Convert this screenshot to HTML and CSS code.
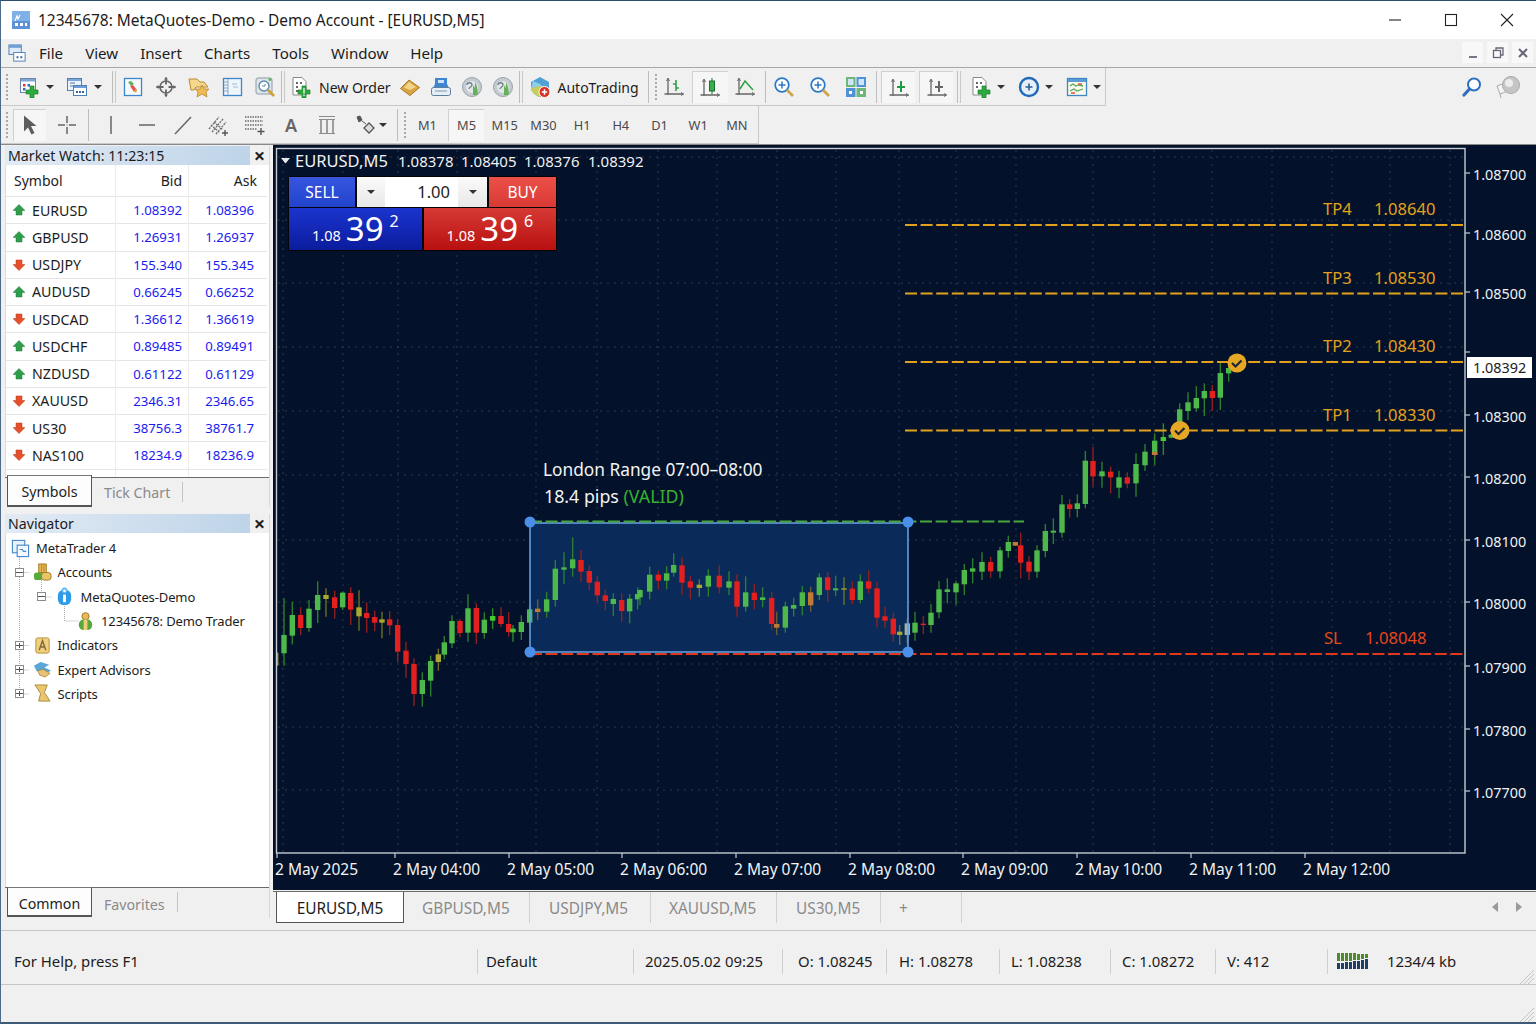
FILE: index.html
```html
<!DOCTYPE html>
<html lang="en">
<head>
<meta charset="utf-8">
<title>12345678: MetaQuotes-Demo - Demo Account - [EURUSD,M5]</title>
<link rel="stylesheet" href="styles.css">
</head>
<body>
<svg class="defs" xmlns="http://www.w3.org/2000/svg">
  <symbol id="i-new" viewBox="0 0 22 22"><rect x="2.500" y="2.500" width="15" height="14" fill="#fff" stroke="#6d86a8"/><path d="M3 3h14v2.500H3z" fill="#7fa6d6"/><path d="M5 8h2.500v2.500H5z" fill="#d33"/><path d="M9.500 8h2.500v2.500H9.500z" fill="#36c"/><path d="M5 12h2.500v2.500H5z" fill="#36c"/><path d="M12 10h4v4h4v4h-4v4h-4v-4H8v-4h4z" fill="#2cab3c" stroke="#1b7f2b" stroke-width=".7"/></symbol>
  <symbol id="i-prof" viewBox="0 0 22 22"><rect x="1.500" y="2.500" width="14" height="12" fill="#eaf2fb" stroke="#4e7fb5"/><path d="M2 3h13v2H2z" fill="#7fa6d6"/><path d="M4 7h5M4 10h3" stroke="#56799f"/><rect x="7.500" y="9.500" width="13" height="10" fill="#fff" stroke="#4e7fb5"/><path d="M8 10h12v2H8z" fill="#6f9fd6"/><path d="M10 15h2v2h-2zM13 15h2v2h-2zM16 15h2v2h-2z" fill="#36639c"/></symbol>
  <symbol id="i-mw" viewBox="0 0 22 22"><rect x="2.500" y="2.500" width="17" height="17" fill="#f5fafe" stroke="#3f86c9" stroke-width="1.300"/><path d="M6 6l3-1 3 3-3 2z" fill="#5cb45a"/><path d="M8 10l3-1 4 5-3 2z" fill="#e2574c"/><circle cx="13.500" cy="15" r="1.400" fill="#e8a33c"/></symbol>
  <symbol id="i-cross" viewBox="0 0 22 22"><circle cx="11" cy="11" r="6" fill="none" stroke="#666" stroke-width="1.600"/><path d="M11 1.500v7M11 13.500v7M1.500 11h7M13.500 11h7" stroke="#666" stroke-width="1.800"/><path d="M9 3.500l2-2.500 2 2.500zM9 18.500l2 2.500 2-2.500zM3.500 9L1 11l2.500 2zM18.500 9L21 11l-2.500 2z" fill="#666"/></symbol>
  <symbol id="i-fold" viewBox="0 0 22 22"><path d="M1 3h8l3 3h4l4 5H8l-2 3H3z" fill="#f5d88e" stroke="#b98a2e"/><path d="M14 9l2 4h5l-3 3 1 5-5-3-5 3 1-5-3-3h5z" fill="#eebb55" stroke="#b98a2e" stroke-width=".8"/></symbol>
  <symbol id="i-nav" viewBox="0 0 22 22"><rect x="2.500" y="2.500" width="18" height="17" fill="#eef6fd" stroke="#3f86c9" stroke-width="1.300"/><path d="M7 3v16" stroke="#8aa9c4"/><path d="M3 6h4M3 9h4M3 12h4M3 15h4" stroke="#8aa9c4"/><path d="M11 8h5M12 11h5" stroke="#9cbcd8"/></symbol>
  <symbol id="i-test" viewBox="0 0 22 22"><rect x="2" y="2" width="16" height="16" rx="2" fill="#dde6ea" stroke="#8e9aa4"/><circle cx="10" cy="10" r="5" fill="#fff" stroke="#5d8bab" stroke-width="1.400"/><path d="M8 10h3v-2" fill="none" stroke="#5d8bab"/><circle cx="16" cy="3.500" r="1.500" fill="#5cb45a"/><path d="M14 14l6 6" stroke="#d0a030" stroke-width="2.600"/></symbol>
  <symbol id="i-order" viewBox="0 0 22 22"><path d="M3 1.500h9l4 4V19H3z" fill="#fff" stroke="#8a8a8a"/><path d="M6 6h2v2H6zM10 6h2v2h-2zM6 10h2v2H6zM6 14h2v2H6z" fill="#666"/><path d="M12 10h4v4h4v4h-4v4h-4v-4H8v-4h4z" fill="#2cab3c" stroke="#1b7f2b" stroke-width=".7"/><path d="M14 12v5.500M14 18.500v1.500" stroke="#fff" stroke-width="1.200"/></symbol>
  <symbol id="i-gold" viewBox="0 0 22 22"><path d="M1.500 12.500L10 4l10.500 7.500L11 19.500z" fill="#d9a441" stroke="#a87a22"/><path d="M5 11.500L10 6l7 5-6 3z" fill="#f1d38a"/></symbol>
  <symbol id="i-print" viewBox="0 0 22 22"><path d="M5 2h12v6l2 4H3l2-4z" fill="#3f86d0"/><path d="M8 4h6v3H8z" fill="#cfe3f6"/><rect x="1.500" y="11.500" width="19" height="8" rx="2" fill="#e6edf3" stroke="#5a7f9f"/><path d="M5 15h12" stroke="#7f9bb5"/></symbol>
  <symbol id="i-sig" viewBox="0 0 22 22"><circle cx="11" cy="11" r="9.500" fill="#c5ccd1" stroke="#98a3aa"/><circle cx="11" cy="11" r="6" fill="#e3e7ea"/><path d="M6 9c0-3 5-3 5 0 0 2-3 2-3 4" fill="none" stroke="#71818c" stroke-width="1.300"/><path d="M12 19V9l1.500 3 1-6 1.500 5 1 8z" fill="#66b25b"/></symbol>
  <symbol id="i-auto" viewBox="0 0 22 22"><path d="M2 6l9-5 9 5v6c0 4-5 8-9 9-4-1-9-5-9-9z" fill="#4fa1d6"/><path d="M4 5l7 3 3 3-12 1z" fill="#8fcdea"/><path d="M2 12l10-2 4 5-5 6c-4-1-9-5-9-9z" fill="#c7cf5a"/><circle cx="15.500" cy="16" r="5.500" fill="#d6322b" stroke="#fff"/><path d="M12.800 16h5.400M15.500 13.300v5.400" stroke="#fff" stroke-width="1.500"/></symbol>
  <symbol id="i-bars" viewBox="0 0 22 22"><path d="M5 3v16M1.500 18h19" stroke="#666" stroke-width="1.300"/><path d="M3.500 5L5 2l1.500 3M18 16.500l2.500 1.500-2.500 1.500" fill="none" stroke="#666"/><path d="M13 4v11" stroke="#2ea043" stroke-width="1.600"/><path d="M10 8h3M13 12h3" stroke="#2ea043" stroke-width="1.400"/></symbol>
  <symbol id="i-cand" viewBox="0 0 22 22"><path d="M5 3v16M1.500 18h19" stroke="#666" stroke-width="1.300"/><path d="M3.500 5L5 2l1.500 3M18 16.500l2.500 1.500-2.500 1.500" fill="none" stroke="#666"/><path d="M13 1v16" stroke="#1f6f33"/><rect x="10.500" y="4" width="5" height="10" fill="#35b04a" stroke="#1f6f33"/></symbol>
  <symbol id="i-line" viewBox="0 0 22 22"><path d="M5 3v16M1.500 18h19" stroke="#666" stroke-width="1.300"/><path d="M3.500 5L5 2l1.500 3M18 16.500l2.500 1.500-2.500 1.500" fill="none" stroke="#666"/><path d="M6 13l5-8 8 9" fill="none" stroke="#2ea043" stroke-width="1.500"/></symbol>
  <symbol id="i-zoom" viewBox="0 0 22 22"><circle cx="9" cy="9" r="6.800" fill="#fff" stroke="#2a78c8" stroke-width="1.700"/><path d="M5.500 9h7M9 5.500v7" stroke="#2a78c8" stroke-width="1.500"/><path d="M14 14l6 6" stroke="#cda54f" stroke-width="2.800"/></symbol>
  <symbol id="i-tile" viewBox="0 0 22 22"><rect x="1" y="1" width="9.500" height="10" fill="#6db77a"/><rect x="11.500" y="1" width="9.500" height="10" fill="#4f93d6"/><rect x="1" y="12" width="9.500" height="9" fill="#4f93d6"/><rect x="11.500" y="12" width="9.500" height="9" fill="#6db77a"/><path d="M3 3h5.500v6H3zM13.500 3H19v6h-5.500z" fill="#cfe6f7"/><path d="M4 15h3v3H4zM15 15h3v3h-3z" fill="#fff"/></symbol>
  <symbol id="i-sh1" viewBox="0 0 22 22"><path d="M5 3v16M1.500 18h19" stroke="#666" stroke-width="1.300"/><path d="M3.500 5L5 2l1.500 3M18 16.500l2.500 1.500-2.500 1.500" fill="none" stroke="#666"/><path d="M13 4v11M9 10h8" stroke="#1f9a45" stroke-width="2"/></symbol>
  <symbol id="i-sh2" viewBox="0 0 22 22"><path d="M5 3v16M1.500 18h19" stroke="#666" stroke-width="1.300"/><path d="M3.500 5L5 2l1.500 3M18 16.500l2.500 1.500-2.500 1.500" fill="none" stroke="#666"/><path d="M13 4v11M9 10h8" stroke="#666" stroke-width="2"/></symbol>
  <symbol id="i-doc" viewBox="0 0 22 22"><path d="M3 1.500h9l4 4V19H3z" fill="#fff" stroke="#8a8a8a"/><path d="M6 6h2v2H6zM10 6h2v2h-2zM6 10h2v2H6z" fill="#666"/><path d="M12 10h4v4h4v4h-4v4h-4v-4H8v-4h4z" fill="#2cab3c" stroke="#1b7f2b" stroke-width=".7"/></symbol>
  <symbol id="i-clock" viewBox="0 0 22 22"><circle cx="11" cy="11" r="9" fill="#e6eff8" stroke="#2068b8" stroke-width="2.400"/><path d="M7.500 11h7M11 7.500v7" stroke="#2d5f96" stroke-width="1.600"/></symbol>
  <symbol id="i-tpl" viewBox="0 0 22 22"><rect x="1.500" y="2.500" width="19" height="17" fill="#fbf8ec" stroke="#3f86c9" stroke-width="1.300"/><path d="M2 3h18v3H2z" fill="#5b9bd5"/><path d="M4 10l3-2 3 2 3-1 4 1M4 15l4-2 3 2 6-2" fill="none" stroke="#5aa85a" stroke-width="1.300"/><path d="M5 17h4M12 8h4" stroke="#d9533c" stroke-width="1.300"/></symbol>
  <symbol id="i-search" viewBox="0 0 22 22"><circle cx="13" cy="8.500" r="6" fill="#fff" stroke="#2f6fc0" stroke-width="2"/><path d="M8.500 13L3 19" stroke="#2f6fc0" stroke-width="3.200" stroke-linecap="round"/></symbol>
  <symbol id="i-ball" viewBox="0 0 28 24"><path d="M3 11l8-3 3 8-8 3z" fill="#f5f5f5" stroke="#aaa"/><path d="M6 19l1 4" stroke="#aaa"/><circle cx="17" cy="10" r="8.500" fill="#c5c5c5" stroke="#aaa"/><circle cx="15" cy="8" r="4" fill="#ececec"/></symbol>
  <symbol id="i-arrow" viewBox="0 0 22 22"><path d="M5 1.500v16l4-4 3.500 7 3-1.500L12 12h5.500z" fill="#5d5d5d"/></symbol>
  <symbol id="i-xh" viewBox="0 0 22 22"><path d="M11 2v7M11 13v7M2 11h7M13 11h7" stroke="#666" stroke-width="1.500"/><path d="M10.500 10.500h1v1h-1z" fill="#666"/></symbol>
  <symbol id="i-v" viewBox="0 0 22 22"><path d="M11 2v18" stroke="#666" stroke-width="1.500"/></symbol>
  <symbol id="i-h" viewBox="0 0 22 22"><path d="M3 11h16" stroke="#666" stroke-width="1.500"/></symbol>
  <symbol id="i-t" viewBox="0 0 22 22"><path d="M3 20L19 3" stroke="#666" stroke-width="1.500"/></symbol>
  <symbol id="i-chan" viewBox="0 0 22 22"><path d="M1 15L11 3M4 18L15 5M8 20L18 8M3 11l9 8M6 8l9 8" stroke="#6a6a6a" stroke-width="1.300" stroke-dasharray="2 1"/><path d="M17 16v6M14 19h6" stroke="#555" stroke-width="1.400"/></symbol>
  <symbol id="i-grid" viewBox="0 0 22 22"><path d="M1 3h18M1 7h18M1 11h18M1 15h12" stroke="#6a6a6a" stroke-width="1.400" stroke-dasharray="1.500 1"/><path d="M17 14v7M13.500 17.500h7" stroke="#555" stroke-width="1.400"/></symbol>
  <symbol id="i-lab" viewBox="0 0 22 22"><path d="M3 2.500h16M3 5.500h16M3 19.500h16" stroke="#8a8a8a"/><path d="M5 6v13M11 6v13M17 6v13" stroke="#8a8a8a" stroke-width="1.600"/></symbol>
  <symbol id="i-arrs" viewBox="0 0 22 22"><path d="M3 3l3-1 2 4-3 2zM8 7l4 3" fill="#555" stroke="#555"/><path d="M15 9l5 5-5 5-5-5z" fill="#ddd" stroke="#555" stroke-width="1.300"/></symbol>
  <symbol id="up" viewBox="0 0 12 12"><path d="M6 .5L12 6.500H9V11H3V6.500H0z" fill="#2f9e4c" stroke="#1f7a38" stroke-width=".5"/></symbol>
  <symbol id="down" viewBox="0 0 12 12"><path d="M6 11.500L12 5.500H9V1H3v4.500H0z" fill="#e4502a" stroke="#b83a1c" stroke-width=".5"/></symbol>
  <symbol id="t-mt" viewBox="0 0 20 20"><rect x="1.500" y="1.500" width="13" height="13" fill="#e8f2fb" stroke="#4a8ad0" stroke-width="1.200"/><rect x="6.500" y="6.500" width="12" height="12" fill="#f5faff" stroke="#4a8ad0" stroke-width="1.200"/><path d="M9 11h3l1 2h3" fill="none" stroke="#4a8ad0" stroke-width="1.200"/></symbol>
  <symbol id="t-acc" viewBox="0 0 20 20"><path d="M6 1h8v9H6z" fill="#e6b85a" stroke="#a37a1f"/><path d="M9 2v7M11.500 2v7" stroke="#a37a1f" stroke-width=".8"/><rect x="1" y="10" width="9" height="8" rx="3" fill="#58a83c"/><rect x="9" y="10" width="10" height="8" rx="3" fill="#e9c56a" stroke="#a37a1f"/></symbol>
  <symbol id="t-info" viewBox="0 0 20 20"><rect x="3" y="3" width="14" height="16" rx="6" fill="#2f9be6"/><circle cx="10" cy="3.500" r="3" fill="#5cb7f2"/><path d="M10 8v8" stroke="#fff" stroke-width="3"/><circle cx="10" cy="4" r="1.400" fill="#fff"/></symbol>
  <symbol id="t-user" viewBox="0 0 20 20"><circle cx="10" cy="4.500" r="3.800" fill="#e8b860" stroke="#a37a1f"/><rect x="3" y="8" width="14" height="11" rx="5" fill="#58a83c"/><path d="M8 8h4v11H8z" fill="#efcd7a"/></symbol>
  <symbol id="t-ind" viewBox="0 0 20 20"><rect x="3" y="2" width="14" height="16" rx="2" fill="#f0cf7e" stroke="#b78d33"/><path d="M6.500 15L10 5l3.500 10M7.800 11.500h4.500" fill="none" stroke="#7d6a3a" stroke-width="1.500"/></symbol>
  <symbol id="t-ea" viewBox="0 0 20 20"><path d="M1 6l7-4 9 3-5 3 7 3-5 3-4-3-6 1z" fill="#5aa6d6"/><path d="M5 11l6-1 7 4-5 4-6-2z" fill="#e6c27a" stroke="#a37a1f" stroke-width=".7"/></symbol>
  <symbol id="t-scr" viewBox="0 0 20 20"><path d="M2 1h13l-3 8 6 9H6l2-8z" fill="#e9c66f" stroke="#a98a38"/></symbol>
</svg>

<div class="win">
  <header class="titlebar">
    <svg class="app-ic" viewBox="0 0 18 18"><rect width="18" height="18" fill="#5c93d6"/><path d="M0 0h18v10H0z" fill="#7fb0e6"/><path d="M3 10l2-5 1 3 2-4" fill="none" stroke="#fff" stroke-width="1.200"/><path d="M3 12h3v3H3zM8 12h3v3H8zM13 12h2v3h-2z" fill="#fff"/></svg>
    <span class="title-text">12345678: MetaQuotes-Demo - Demo Account - [EURUSD,M5]</span>
    <div class="win-btns">
      <svg class="wb" viewBox="0 0 14 14"><path d="M1 7h12" stroke="#222" stroke-width="1.100"/></svg>
      <svg class="wb" viewBox="0 0 14 14"><rect x="1.500" y="1.500" width="11" height="11" fill="none" stroke="#222" stroke-width="1.100"/></svg>
      <svg class="wb" viewBox="0 0 14 14"><path d="M1 1l12 12M13 1L1 13" stroke="#222" stroke-width="1.100"/></svg>
    </div>
  </header>

  <nav class="menubar">
    <svg class="menu-ic" viewBox="0 0 20 20"><rect x="1" y="1" width="13" height="10" fill="#dfeaf6" stroke="#4e7fb5"/><path d="M1 1h13v3H1z" fill="#6f9fd6"/><rect x="6" y="9" width="12" height="9" fill="#fff" stroke="#4e7fb5"/><path d="M9 13h2v2H9zM13 13h2v2h-2z" fill="#36639c"/></svg>
    <span class="m">File</span><span class="m">View</span><span class="m">Insert</span><span class="m">Charts</span><span class="m">Tools</span><span class="m">Window</span><span class="m">Help</span>
    <div class="mdi">
      <span class="mdi-b"><svg viewBox="0 0 12 12"><path d="M2 10h8" stroke="#778" stroke-width="2"/></svg></span>
      <span class="mdi-b"><svg viewBox="0 0 12 12"><rect x="1.500" y="3.500" width="7" height="7" fill="none" stroke="#667" stroke-width="1.300"/><path d="M4 3V1h7v7H9" fill="none" stroke="#667" stroke-width="1.300"/></svg></span>
      <span class="mdi-b"><svg viewBox="0 0 12 12"><path d="M2 2l8 8M10 2l-8 8" stroke="#667" stroke-width="2"/></svg></span>
    </div>
  </nav>

  <div class="toolbar tb1">
    <div class="band band1">
      <i class="grip"></i>
      <div class="split s1"><svg class="ic"><use href="#i-new"/></svg><b class="caret"></b></div>
      <div class="split"><svg class="ic"><use href="#i-prof"/></svg><b class="caret"></b></div>
      <i class="sep sep-a"></i>
      <div class="cell c33"><svg class="ic"><use href="#i-mw"/></svg></div>
      <div class="cell c33"><svg class="ic"><use href="#i-cross"/></svg></div>
      <div class="cell c33"><svg class="ic"><use href="#i-fold"/></svg></div>
      <div class="cell c33"><svg class="ic"><use href="#i-nav"/></svg></div>
      <div class="cell c33"><svg class="ic"><use href="#i-test"/></svg></div>
      <i class="sep"></i>
      <div class="textbtn order"><svg class="ic"><use href="#i-order"/></svg><span>New Order</span></div>
      <div class="cell c31"><svg class="ic"><use href="#i-gold"/></svg></div>
      <div class="cell c31"><svg class="ic"><use href="#i-print"/></svg></div>
      <div class="cell c31"><svg class="ic"><use href="#i-sig"/></svg></div>
      <div class="cell c31"><svg class="ic"><use href="#i-sig"/></svg></div>
      <i class="sep"></i>
      <div class="textbtn auto"><svg class="ic"><use href="#i-auto"/></svg><span>AutoTrading</span></div>
      <i class="sep sep-b"></i>
      <i class="grip grip-b"></i>
      <div class="cell c35"><svg class="ic"><use href="#i-bars"/></svg></div>
      <div class="cell c35 on"><svg class="ic"><use href="#i-cand"/></svg></div>
      <div class="cell c35"><svg class="ic"><use href="#i-line"/></svg></div>
      <i class="sep sep-c"></i>
      <div class="cell c36"><svg class="ic"><use href="#i-zoom"/></svg></div>
      <div class="cell c36"><svg class="ic"><use href="#i-zoom"/></svg></div>
      <div class="cell c36"><svg class="ic"><use href="#i-tile"/></svg></div>
      <i class="sep sep-d"></i>
      <div class="cell c34 on"><svg class="ic"><use href="#i-sh1"/></svg></div>
      <div class="cell c34 on gapl"><svg class="ic"><use href="#i-sh2"/></svg></div>
      <i class="sep sep-e"></i>
      <div class="split s2"><svg class="ic"><use href="#i-doc"/></svg><b class="caret"></b></div>
      <div class="split s2"><svg class="ic"><use href="#i-clock"/></svg><b class="caret"></b></div>
      <div class="split s2"><svg class="ic"><use href="#i-tpl"/></svg><b class="caret"></b></div>
    </div>
    <div class="search">
      <svg class="ic"><use href="#i-search"/></svg>
      <svg class="ball"><use href="#i-ball"/></svg>
    </div>
  </div>

  <div class="toolbar tb2">
    <div class="band band2">
      <i class="grip"></i>
      <div class="cell c33 on first"><svg class="ic"><use href="#i-arrow"/></svg></div>
      <div class="cell c42"><svg class="ic"><use href="#i-xh"/></svg></div>
      <i class="sep sep-f"></i>
      <div class="cell c36"><svg class="ic"><use href="#i-v"/></svg></div>
      <div class="cell c36"><svg class="ic"><use href="#i-h"/></svg></div>
      <div class="cell c36"><svg class="ic"><use href="#i-t"/></svg></div>
      <div class="cell c36"><svg class="ic"><use href="#i-chan"/></svg></div>
      <div class="cell c36"><svg class="ic"><use href="#i-grid"/></svg></div>
      <div class="cell c36 glyph">A</div>
      <div class="cell c36"><svg class="ic"><use href="#i-lab"/></svg></div>
      <div class="split s3"><svg class="ic"><use href="#i-arrs"/></svg><b class="caret"></b></div>
      <i class="sep sep-g"></i>
      <i class="grip grip-c"></i>
      <div class="tf">M1</div><div class="tf on">M5</div><div class="tf">M15</div><div class="tf">M30</div><div class="tf">H1</div><div class="tf">H4</div><div class="tf">D1</div><div class="tf">W1</div><div class="tf">MN</div>
    </div>
  </div>

  <main class="main">
    <aside class="left">
      <section class="panel mw">
        <div class="phead"><span class="ptitle">Market Watch: 11:23:15</span><span class="pclose">×</span></div>
        <div class="quotes">
          <div class="qrow qh"><span>Symbol</span><span>Bid</span><span>Ask</span></div>
          <div class="qrow"><span class="sym"><svg class="dir"><use href="#up"/></svg>EURUSD</span><span>1.08392</span><span>1.08396</span></div>
          <div class="qrow"><span class="sym"><svg class="dir"><use href="#up"/></svg>GBPUSD</span><span>1.26931</span><span>1.26937</span></div>
          <div class="qrow"><span class="sym"><svg class="dir"><use href="#down"/></svg>USDJPY</span><span>155.340</span><span>155.345</span></div>
          <div class="qrow"><span class="sym"><svg class="dir"><use href="#up"/></svg>AUDUSD</span><span>0.66245</span><span>0.66252</span></div>
          <div class="qrow"><span class="sym"><svg class="dir"><use href="#down"/></svg>USDCAD</span><span>1.36612</span><span>1.36619</span></div>
          <div class="qrow"><span class="sym"><svg class="dir"><use href="#up"/></svg>USDCHF</span><span>0.89485</span><span>0.89491</span></div>
          <div class="qrow"><span class="sym"><svg class="dir"><use href="#up"/></svg>NZDUSD</span><span>0.61122</span><span>0.61129</span></div>
          <div class="qrow"><span class="sym"><svg class="dir"><use href="#down"/></svg>XAUUSD</span><span>2346.31</span><span>2346.65</span></div>
          <div class="qrow"><span class="sym"><svg class="dir"><use href="#down"/></svg>US30</span><span>38756.3</span><span>38761.7</span></div>
          <div class="qrow"><span class="sym"><svg class="dir"><use href="#down"/></svg>NAS100</span><span>18234.9</span><span>18236.9</span></div>
          <div class="qrow"><span></span><span></span><span></span></div>
        </div>
        <div class="ptabs"><span class="ptab active">Symbols</span><span class="ptab tick">Tick Chart</span></div>
      </section>
      <section class="panel nav">
        <div class="phead"><span class="ptitle">Navigator</span><span class="pclose">×</span></div>
        <div class="tree">
          <svg class="tree-lines" viewBox="0 0 262 180"><path d="M13.500 24V161M13.500 39.500h10M13.500 112.500h10M13.500 137h10M13.500 161h10M35.500 47v17h10M58.500 73v15h14" fill="none" stroke="#aaa" stroke-dasharray="1 1"/></svg>
          <div class="node n0"><svg class="tic"><use href="#t-mt"/></svg>MetaTrader 4</div>
          <div class="node n1"><i class="exp minus"></i><svg class="tic"><use href="#t-acc"/></svg>Accounts</div>
          <div class="node n2"><i class="exp minus"></i><svg class="tic"><use href="#t-info"/></svg>MetaQuotes-Demo</div>
          <div class="node n3"><svg class="tic"><use href="#t-user"/></svg>12345678: Demo Trader</div>
          <div class="node n1"><i class="exp"></i><svg class="tic"><use href="#t-ind"/></svg>Indicators</div>
          <div class="node n1"><i class="exp"></i><svg class="tic"><use href="#t-ea"/></svg>Expert Advisors</div>
          <div class="node n1"><i class="exp"></i><svg class="tic"><use href="#t-scr"/></svg>Scripts</div>
        </div>
        <div class="ptabs ptabs2"><span class="ptab active">Common</span><span class="ptab tick">Favorites</span></div>
      </section>
    </aside>

    <div class="chartcol">
      <div class="chart">
        <svg id="plot" class="plot" viewBox="273 145 1263 745" xmlns="http://www.w3.org/2000/svg">
          <defs><clipPath id="plotclip"><rect x="277" y="149" width="1188" height="704"/></clipPath></defs>
          <rect class="frame" x="276.500" y="148.500" width="1188.500" height="704.500"/>
          <g id="grid"></g>
          <rect class="rangebox" x="530" y="523" width="378" height="129"/>
          <path class="dash red" d="M530 654H1465"/>
          <g id="candles" clip-path="url(#plotclip)"></g>
          <path class="dash gold" d="M905 225H1465M905 293.500H1465M905 362H1465M905 430.500H1465"/>
          <rect class="rangeline" x="530" y="523" width="378" height="129"/>
          <path class="dash green" d="M530 521.500H1024"/>
          <circle class="handle" cx="530" cy="522" r="5.500"/><circle class="handle" cx="908" cy="522" r="5.500"/><circle class="handle" cx="530" cy="652" r="5.500"/><circle class="handle" cx="908" cy="652" r="5.500"/>
          <circle class="badge" cx="1237" cy="363" r="9.500"/><path class="tick-mark" d="M1232 363l3.500 3.500 6-6"/>
          <circle class="badge" cx="1180" cy="430.500" r="9.500"/><path class="tick-mark" d="M1175 430.500l3.500 3.500 6-6"/>

          <path class="tri" d="M281 158h9l-4.500 5.500z"/>
          <text class="hd hd-sym" x="295" y="167">EURUSD,M5</text>
          <text class="hd" x="398" y="167">1.08378</text><text class="hd" x="461" y="167">1.08405</text><text class="hd" x="524" y="167">1.08376</text><text class="hd" x="588" y="167">1.08392</text>

          <text class="note" x="543" y="476">London Range 07:00–08:00</text>
          <text class="note note2" x="544" y="503">18.4 pips <tspan class="valid">(VALID)</tspan></text>

          <text class="lvl" x="1323" y="215">TP4</text><text class="lvl" x="1374" y="215">1.08640</text>
          <text class="lvl" x="1323" y="284">TP3</text><text class="lvl" x="1374" y="284">1.08530</text>
          <text class="lvl" x="1323" y="352">TP2</text><text class="lvl" x="1374" y="352">1.08430</text>
          <text class="lvl" x="1323" y="421">TP1</text><text class="lvl" x="1374" y="421">1.08330</text>
          <text class="lvl sl" x="1324" y="644">SL</text><text class="lvl sl" x="1365" y="644">1.08048</text>

          <g id="labels"></g>
          <rect class="last-box" x="1467" y="357" width="65" height="21"/>
          <text class="axis last" x="1473" y="373">1.08392</text>
        </svg>

        <div class="trade">
          <div class="trow">
            <div class="act sell">SELL</div>
            <div class="spin"><span class="drop"><b class="caret"></b></span><span class="vol">1.00</span><span class="drop"><b class="caret"></b></span></div>
            <div class="act buy">BUY</div>
          </div>
          <div class="prow">
            <div class="px pxsell"><span class="p-s">1.08</span><span class="p-b">39</span><span class="p-u">2</span></div>
            <div class="px pxbuy"><span class="p-s">1.08</span><span class="p-b">39</span><span class="p-u">6</span></div>
          </div>
        </div>
      </div>

      <div class="ctabs">
        <span class="ctab active">EURUSD,M5</span>
        <span class="ctab w1">GBPUSD,M5</span>
        <span class="ctab w2">USDJPY,M5</span>
        <span class="ctab w3">XAUUSD,M5</span>
        <span class="ctab w4">US30,M5</span>
        <span class="ctab w5">+</span>
        <div class="carrows"><svg viewBox="0 0 8 10"><path d="M7 0v10L1 5z" fill="#9a9a9a"/></svg><svg viewBox="0 0 8 10"><path d="M1 0v10l6-5z" fill="#9a9a9a"/></svg></div>
      </div>
    </div>
  </main>

  <footer class="status">
    <span class="st">For Help, press F1</span>
    <span class="st">Default</span>
    <span class="st">2025.05.02 09:25</span>
    <span class="st">O: 1.08245</span>
    <span class="st">H: 1.08278</span>
    <span class="st">L: 1.08238</span>
    <span class="st">C: 1.08272</span>
    <span class="st">V: 412</span>
    <span class="st last-st"><svg class="conn" viewBox="0 0 34 16"><path d="M0 0h3v8H0zM4 0h3v8H4zM8 0h3v8H8zM12 0h3v8h-3zM16 0h3v7h-3zM20 1h3v6h-3zM24 1h3v5h-3zM28 1h3v4h-3z" fill="#4f8a2c"/><path d="M0 10h3v6H0zM4 10h3v6H4zM8 9h3v7H8zM12 9h3v7h-3zM16 8h3v8h-3zM20 8h3v8h-3zM24 7h3v9h-3zM28 6h3v10h-3z" fill="#1f3f66"/></svg>1234/4 kb</span>
    <svg class="grip-r" viewBox="0 0 16 16"><path d="M16 2L2 16M16 6L6 16M16 10L10 16" stroke="#c4c4c4"/></svg>
  </footer>
  <div class="foot"><svg class="grip-r" viewBox="0 0 16 16"><path d="M16 2L2 16M16 6L6 16M16 10L10 16" stroke="#c4c4c4"/></svg></div>
</div>
<script src="chart.js"></script>
</body>
</html>
```
FILE: styles.css
```css
* { box-sizing: border-box; }
html, body { margin: 0; padding: 0; }
body { width: 1536px; height: 1024px; overflow: hidden; font-family: "Noto Sans", "Open Sans", sans-serif; color: #1c1c1c; background: #f0f0f0; }
.defs { display: none; }
.win { width: 1536px; height: 1024px; display: flex; flex-direction: column; border-top: 1px solid #2e4c6c; border-left: 1px solid #4d6a88; border-bottom: 2px solid #3e5a75; position: relative; overflow: hidden; }

.titlebar { height: 38px; flex: none; background: #fff; display: flex; align-items: center; padding-left: 11px; }
.app-ic { width: 18px; height: 18px; flex: none; }
.title-text { margin-left: 8px; font-size: 15.45px; white-space: nowrap; }
.win-btns { margin-left: auto; display: flex; padding-right: 22px; }
.wb { width: 14px; height: 14px; margin-left: 42px; }

.menubar { height: 29px; flex: none; background: #f0f0f0; border-bottom: 1px solid #a8a8a8; display: flex; align-items: center; padding-left: 7px; font-size: 15.1px; }
.menu-ic { width: 19px; height: 19px; flex: none; margin-right: 12px; }
.m { margin-right: 22px; white-space: nowrap; }
.mdi { margin-left: auto; display: flex; gap: 4px; padding-right: 3px; padding-bottom: 1px; }
.mdi-b { width: 21px; height: 21px; background: #f8f8f8; display: flex; align-items: center; justify-content: center; }
.mdi-b svg { width: 12px; height: 12px; }

.toolbar { height: 38px; flex: none; display: flex; align-items: center; background: #f0f0f0; }
.band { display: flex; align-items: center; height: 100%; border-right: 1px solid #c9c9c9; border-bottom: 1px solid #c9c9c9; }
.band1 { width: 1105px; padding-top: 1px; }
.band2 { width: 758px; }
.search { margin-left: auto; display: flex; align-items: center; padding-right: 14px; gap: 11px; }
.ball { width: 28px; height: 24px; }
.tb2 { height: 39px; border-bottom: 1px solid #888; }
.ic { width: 22px; height: 22px; flex: none; }
.grip { width: 2px; height: 26px; margin-left: 5px; flex: none; border-left: 2px dotted #a8a8a8; }
.grip-b { margin-left: 6px; }
.grip-c { margin-left: 6px; margin-right: 2px; }
.sep { width: 4px; height: 32px; flex: none; border-left: 1px solid #bdbdbd; border-right: 1px solid #c8c8c8; }
.sep-a { margin-left: 4px; }
.sep-b { margin-left: 8px; width: 1px; border-right: 0; }
.sep-c { margin-left: 2px; width: 1px; border-right: 0; }
.sep-d { margin-left: 2px; width: 2px; border-right: 0; margin-right: 3px; }
.sep-e { margin-left: 4px; }
.sep-f { width: 1px; border-right: 0; margin-right: 4px; }
.sep-g { margin-left: 2px; width: 1px; border-right: 0; }
.cell { height: 32px; flex: none; display: flex; align-items: center; justify-content: center; }
.c33 { width: 33px; }
.c31 { width: 31px; }
.c35 { width: 35.5px; }
.c36 { width: 36px; }
.c42 { width: 42px; }
.c34 { width: 34px; }
.gapl { margin-left: 4px; }
.first { margin-left: 5px; }
.on { background: #f6f6f6; border-top: 1px solid #d0d0d0; border-left: 1px solid #d0d0d0; }
.split { width: 46px; height: 32px; flex: none; display: flex; align-items: center; padding-left: 4px; gap: 6px; }
.s1 { margin-left: 6px; margin-right: 2px; }
.s2 { width: 48px; padding-left: 9px; gap: 5px; }
.s3 { width: 50px; padding-left: 9px; gap: 3px; }
.caret { width: 0; height: 0; flex: none; border-left: 4px solid transparent; border-right: 4px solid transparent; border-top: 4px solid #333; }
.textbtn { display: flex; align-items: center; font-size: 14px; flex: none; white-space: nowrap; }
.order { width: 109.5px; padding-left: 5px; gap: 7px; }
.auto { width: 117px; padding-left: 6px; gap: 7px; }
.glyph { font-size: 18px; color: #666; font-weight: 600; }
.tf { width: 38.7px; height: 32px; flex: none; display: flex; align-items: center; justify-content: center; font-size: 12.8px; color: #4a4a4a; }
.tf.on { width: 36.7px; margin: 0 1px; }

.main { height: 785px; flex: none; display: flex; min-height: 0; }
.left { width: 272px; flex: none; padding: 1px 3px 0 4px; display: flex; flex-direction: column; gap: 7px; }
.panel { display: flex; flex-direction: column; border-right: 1px solid #d8d8d8; }
.mw { height: 361px; flex: none; }
.nav { height: 404px; flex: none; }
.phead { height: 19px; flex: none; display: flex; align-items: center; background: linear-gradient(90deg, #e2ebf4, #bfd4e9 92%); font-size: 14.2px; padding-left: 3px; position: relative; }
.ptitle { white-space: nowrap; }
.pclose { position: absolute; right: 0; top: 0; width: 19px; height: 19px; background: #f0f0f0; display: flex; align-items: center; justify-content: center; font-size: 20px; font-weight: 700; line-height: 1; color: #222; }
.quotes { height: 312px; flex: none; background: #fff; overflow: hidden; border-left: 1px solid #ddd; }
.qrow { display: grid; grid-template-columns: 110px 73px 78px; height: 27.25px; font-size: 13.2px; }
.qrow > span { display: flex; align-items: center; justify-content: flex-end; border-right: 1px solid #ececec; border-bottom: 1px solid #e6e6e6; color: #1b1bf0; padding-right: 6px; white-space: nowrap; }
.qrow > span:first-child { justify-content: flex-start; color: #1c1c1c; padding-left: 7px; }
.qrow > span:last-child { padding-right: 13px; border-right: 0; }
.qh { height: 32px; font-size: 14px; }
.qh > span { color: #1c1c1c; }
.qh > span:first-child { padding-left: 8px; }
.qh > span:last-child { padding-right: 10px; }
.sym { font-size: 14.2px; }
.dir { width: 12px; height: 12px; margin-right: 7px; flex: none; }
.ptabs { flex: 1; display: flex; align-items: flex-start; border-top: 1px solid #6a6a6a; font-size: 14.2px; position: relative; }
.ptab { height: 29px; display: flex; align-items: center; white-space: nowrap; }
.ptab.active { width: 85px; justify-content: center; margin: -3px 0 0 2px; height: 32px; background: #fdfdfd; border: 1px solid #555; border-top: 1px solid #777; border-bottom: 2px solid #555; color: #222; padding-top: 2px; }
.ptabs2 .ptab.active { margin-top: -1px; height: 30px; padding-top: 4px; }
.ptabs2 .tick { padding-top: 3px; }
.tick { color: #8a8a8a; padding: 0 13px 0 12px; position: relative; }
.tick::after { content: ""; position: absolute; right: 0; top: 4px; height: 20px; border-right: 1px solid #c4c4c4; }
.tree { flex: 1; background: #fff; position: relative; padding-top: 3px; border-left: 1px solid #ddd; }
.tree-lines { position: absolute; left: 0; top: 0; width: 262px; height: 180px; }
.node { height: 24.3px; display: flex; align-items: center; font-size: 13px; letter-spacing: -.12px; white-space: nowrap; position: relative; }
.n0 { padding-left: 5px; }
.n1 { padding-left: 9px; }
.n2 { padding-left: 31px; }
.n3 { padding-left: 70px; }
.tic { width: 19px; height: 19px; margin-right: 6px; flex: none; }
.n2 .tic { margin-right: 7px; }
.exp { width: 9px; height: 9px; flex: none; border: 1px solid #8c8c8c; background: linear-gradient(#fff 0 3px, #555 3px 4px, #fff 4px), #fff; margin-right: 8.5px; position: relative; }
.exp:not(.minus)::after { content: ""; position: absolute; left: 3px; top: 1px; width: 1px; height: 5px; background: #555; }
.ptabs2 { flex: none; height: 31px; }

.chartcol { flex: 1; min-width: 0; display: flex; flex-direction: column; }
.chart { height: 745px; flex: none; background: #03122a; position: relative; overflow: hidden; }
.plot { position: absolute; left: 0; top: 0; width: 1263px; height: 745px; display: block; }
.frame { fill: #03122a; stroke: #c5ccd3; stroke-width: 1.4; }
.rangebox { fill: #0a2b59; }
.rangeline { fill: none; stroke: #5f9fe2; stroke-width: 1.600; }
.handle { fill: #4a8fe8; }
.dash { fill: none; stroke-width: 2; stroke-dasharray: 12 3.6; }
.green { stroke: #46a83c; }
.red { stroke: #e0371f; }
.gold { stroke: #e2a11c; }
.badge { fill: #e6a824; }
.tick-mark { fill: none; stroke: #1d2634; stroke-width: 2.200; }
.tri { fill: #e8e8e8; }
.hd { fill: #f0f0f0; font-size: 15px; }
.hd-sym { font-size: 16.5px; }
.note { fill: #f2f2f2; font-size: 17.3px; }
.note2 { font-size: 17.8px; }
.valid { fill: #38b02f; }
.lvl { fill: #e4a11c; font-size: 16.6px; }
.sl { fill: #e8461e; }
.axis { fill: #eef1f4; font-size: 14.4px; }
.time { fill: #f0f2f4; font-size: 15.5px; }
.last { fill: #222; }
.last-box { fill: #fff; }
.grid-line { stroke: #4a5a68; stroke-width: 1; stroke-dasharray: 2 5; opacity: .55; }
.tickline { stroke: #c5ccd3; stroke-width: 1.2; }

.trade { position: absolute; left: 15px; top: 31px; width: 269px; background: #050505; padding: 1px; display: flex; flex-direction: column; gap: 1px; }
.trow { display: flex; height: 30px; gap: 2px; }
.act { flex: none; color: #fff; font-size: 15.5px; display: flex; align-items: center; justify-content: center; }
.sell { width: 66px; background: linear-gradient(#3656e0, #2243cc); }
.buy { width: 67px; background: linear-gradient(#ec4f48, #d93a35); }
.spin { width: 130px; flex: none; display: flex; background: #fff; }
.drop { width: 28px; flex: none; background: linear-gradient(#fafafa, #e8e8e8); display: flex; align-items: center; justify-content: center; }
.drop:last-child { width: 29px; }
.vol { flex: 1; text-align: right; padding-right: 8px; font-size: 16.5px; line-height: 30px; color: #222; }
.prow { display: flex; height: 42px; gap: 2px; }
.px { flex: 1; color: #fff; display: flex; align-items: baseline; padding-left: 23px; line-height: 42px; }
.pxsell { background: linear-gradient(#1c34cf, #0a1c9c); }
.pxbuy { background: linear-gradient(#d63a35, #b81010); }
.p-s { font-size: 14.5px; }
.p-b { font-size: 33px; margin-left: 5px; }
.p-u { font-size: 16px; margin-left: 6px; position: relative; top: -14px; }

.ctabs { height: 33px; flex: none; margin-top: 1px; display: flex; border-top: 1px solid #6a6a6a; font-size: 15.4px; color: #8a8a8a; position: relative; }
.ctab { height: 31px; display: flex; align-items: center; padding-left: 18px; padding-top: 2px; white-space: nowrap; border-right: 1px solid #d0d0d0; flex: none; }
.ctab.active { width: 128px; margin-left: 3px; background: #fff; color: #1c1c1c; border: 1px solid #555; border-top: 0; padding-left: 0; justify-content: center; }
.w1 { width: 126px; }
.w2 { width: 121px; padding-left: 19px; }
.w3 { width: 126px; }
.w4 { width: 104px; padding-left: 19px; }
.w5 { width: 81px; padding-left: 18px; }
.carrows { position: absolute; right: 13px; top: 10px; display: flex; gap: 16px; }
.carrows svg { width: 8px; height: 10px; }

.status { height: 55px; flex: none; padding-top: 7px; border-top: 1px solid #c6c6c6; border-bottom: 1px solid #c6c6c6; display: grid; grid-template-columns: 477px 156px 149px 104px 113px 111px 105px 112px 1fr; align-items: center; font-size: 14.9px; position: relative; }
.st { height: 25px; display: flex; align-items: center; padding-left: 11px; border-right: 1px solid #cfcfcf; white-space: nowrap; }
.st:nth-child(1) { padding-left: 13px; }
.st:nth-child(2) { padding-left: 8px; }
.st:nth-child(4) { padding-left: 15px; }
.st:nth-child(5) { padding-left: 12px; }
.last-st { border-right: 0; padding-left: 9px; }
.conn { width: 34px; height: 16px; margin-right: 16px; flex: none; }
.grip-r { position: absolute; right: 2px; bottom: 0; width: 16px; height: 16px; }
.foot { flex: 1; position: relative; }
```
FILE: chart.js
```js
(function () {
  var NS = 'http://www.w3.org/2000/svg';
  var COL = {
    g: ['#4fb84a', '#2c7d2e'], r: ['#e3201f', '#8e1f20'], y: ['#a9a82f', '#6f6f24'],
    o: ['#bf7a35', '#6d5a32'], b: ['#45c92d', '#2f8a2a'], s: ['#9db4ad', '#4a6a55']
  };
  function el(parent, name, attrs) {
    var e = document.createElementNS(NS, name);
    for (var k in attrs) e.setAttribute(k, attrs[k]);
    parent.appendChild(e);
    return e;
  }
  // Each group: origin, then [x, wickTop, wickBottom, bodyTop, bodyBottom, colour] at 3x scale.
  var groups = [
    [275, 510, [
      [2,420,470,428,467,'y'],[27,265,467,375,430,'g'],[52,275,403,315,377,'g'],[77,292,375,315,354,'r'],
      [102,270,365,296,354,'g'],[128,214,339,255,300,'g'],[153,235,320,255,267,'y'],[179,242,326,262,294,'r'],
      [203,245,300,248,292,'g'],[227,232,345,249,299,'r'],[252,241,362,292,319,'y'],[275,277,368,309,324,'r'],
      [299,302,364,321,338,'r'],[321,305,385,328,338,'y'],[344,303,375,328,346,'r'],[368,327,455,345,425,'r'],
      [393,395,503,422,462,'r'],[417,445,588,462,552,'r'],[442,487,590,510,552,'g'],[467,437,560,453,512,'g'],
      [490,416,482,433,456,'y'],[508,378,448,397,434,'g'],[531,316,414,333,400,'g'],[555,326,382,333,369,'r'],
      [579,253,395,295,368,'g'],[604,280,402,294,368,'r'],[628,307,386,329,369,'g'],[653,295,357,318,332,'b'],
      [678,292,352,318,342,'r'],[701,306,380,342,366,'r'],[714,345,395,356,367,'b'],[739,316,390,336,366,'g'],
      [764,285,345,298,338,'g'],[788,268,330,296,306,'o'],[815,245,323,268,305,'g'],[841,150,290,176,270,'g'],
      [867,127,222,172,179,'g'],[893,82,200,148,175,'g'],[918,120,215,150,185,'r'],[943,165,240,183,218,'r'],
      [967,197,280,215,256,'r'],[991,238,302,256,273,'r'],[1015,250,318,267,282,'g']
    ]],
    [610, 510, [
      [35,250,335,270,303,'r'],[59,252,340,266,304,'g'],[83,232,298,252,268,'g'],[90,238,285,240,262,'g'],
      [119,170,268,194,245,'g'],[145,182,238,194,212,'r'],[170,168,238,190,212,'g'],[191,130,200,165,188,'g'],
      [216,140,256,166,218,'r'],[241,197,268,214,233,'r'],[268,208,260,224,234,'y'],[295,178,260,197,230,'g'],
      [328,165,250,197,232,'r'],[357,184,255,214,233,'g'],[381,193,320,214,290,'r'],[407,199,305,247,290,'g'],
      [433,222,298,248,270,'r'],[458,232,292,262,270,'g'],[485,245,360,264,342,'r'],[500,305,375,342,353,'o'],
      [526,275,368,289,353,'g'],[551,263,320,285,296,'g'],[577,228,316,247,288,'g'],[602,230,305,247,286,'o'],
      [628,190,270,202,255,'g'],[653,186,275,202,240,'r'],[677,197,258,235,241,'g'],[702,202,285,235,239,'y'],
      [727,214,283,236,270,'r'],[751,193,280,214,270,'g'],[776,181,250,214,236,'r'],[801,215,352,235,323,'r'],
      [825,290,355,319,332,'r'],[850,308,395,326,373,'r'],[869,345,405,365,375,'y'],[892,326,400,340,375,'s'],
      [915,305,392,338,368,'g'],[940,318,372,341,345,'r'],[963,282,368,308,345,'g'],[987,213,325,238,307,'g'],
      [1012,205,280,238,246,'g']
    ]],
    [950, 340, [
      [18,722,795,730,757,'g'],[43,672,765,690,733,'g'],[68,655,730,685,695,'g'],[96,637,720,666,695,'g'],
      [122,650,713,666,694,'r'],[150,620,715,631,694,'g'],[175,587,653,606,633,'g'],[196,605,618,606,617,'o'],
      [212,578,715,616,668,'r'],[237,647,720,665,695,'r'],[261,616,713,631,695,'g'],[286,552,652,573,633,'g'],
      [310,535,612,572,578,'g'],[336,465,593,493,578,'g'],[359,477,533,493,507,'r'],[382,463,532,490,507,'g'],
      [406,333,505,362,492,'g'],[429,320,440,363,409,'r'],[456,365,443,394,409,'g'],[482,380,460,395,412,'r'],
      [507,392,475,412,443,'g'],[532,397,445,412,431,'r'],[558,340,470,372,430,'g'],[585,312,393,335,376,'g'],
      [614,280,375,302,345,'g'],[614,335,350,336,345,'o'],[640,250,345,291,303,'b'],[664,280,295,284,293,'g'],
      [689,190,242,208,250,'g'],[714,157,240,187,213,'g'],[739,138,215,174,205,'g'],[763,130,228,153,175,'g'],
      [787,135,213,153,174,'r'],[811,68,210,99,173,'g'],[836,70,125,84,100,'g']
    ]]
  ];
  var candles = document.getElementById('candles');
  groups.forEach(function (g) {
    g[2].forEach(function (c) {
      var x = g[0] + c[0] / 3, col = COL[c[5]];
      var top = g[1] + c[1] / 3, bot = g[1] + c[2] / 3, bt = g[1] + c[3] / 3, bb = g[1] + c[4] / 3;
      el(candles, 'line', { x1: x, x2: x, y1: top, y2: bot, stroke: col[1], 'stroke-width': 1.4 });
      el(candles, 'rect', { x: x - 2.7, y: bt, width: 5.4, height: bb - bt, fill: col[0] });
    });
  });

  var grid = document.getElementById('grid');
  [283, 343, 398, 457, 536, 597, 658, 717, 777, 836, 899, 956, 1016, 1093, 1154, 1212, 1272, 1332, 1390, 1450].forEach(function (x) {
    el(grid, 'line', { x1: x, x2: x, y1: 150, y2: 852, 'class': 'grid-line' });
  });
  [157, 220, 283, 347, 411, 475, 540, 602, 664, 727, 790].forEach(function (y) {
    el(grid, 'line', { x1: 278, x2: 1464, y1: y, y2: y, 'class': 'grid-line' });
  });

  var labels = document.getElementById('labels');
  [['1.08700', 175], ['1.08600', 235], ['1.08500', 294], ['1.08300', 417], ['1.08200', 479], ['1.08100', 542],
   ['1.08000', 604], ['1.07900', 668], ['1.07800', 731], ['1.07700', 793]].forEach(function (p) {
    el(labels, 'line', { x1: 1465, x2: 1470, y1: p[1] - 2, y2: p[1] - 2, 'class': 'tickline' });
    el(labels, 'text', { x: 1473, y: p[1] + 5, 'class': 'axis' }).textContent = p[0];
  });
  el(labels, 'line', { x1: 1465, x2: 1470, y1: 352, y2: 352, 'class': 'tickline' });
  [['2 May 2025', 275, 277], ['2 May 04:00', 393, 395], ['2 May 05:00', 507, 509], ['2 May 06:00', 620, 622],
   ['2 May 07:00', 734, 736], ['2 May 08:00', 848, 850], ['2 May 09:00', 961, 963], ['2 May 10:00', 1075, 1077],
   ['2 May 11:00', 1189, 1191], ['2 May 12:00', 1303, 1305]].forEach(function (t) {
    el(labels, 'line', { x1: t[2], x2: t[2], y1: 853, y2: 858, 'class': 'tickline' });
    el(labels, 'text', { x: t[1], y: 875, 'class': 'time' }).textContent = t[0];
  });
})();
```
